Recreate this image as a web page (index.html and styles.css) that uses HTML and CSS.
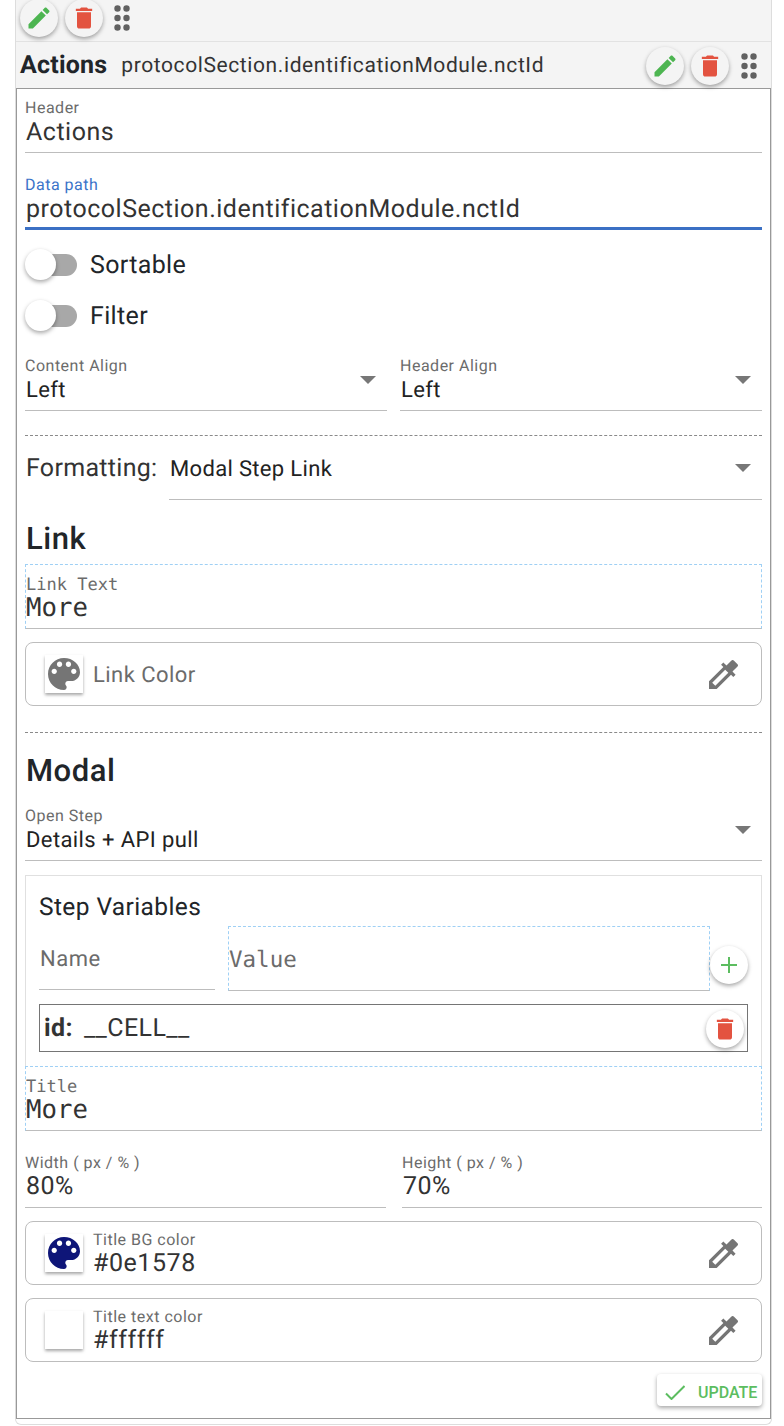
FILE: index.html
```html
<!DOCTYPE html>
<html lang="en">
<head>
<meta charset="utf-8">
<title>Column editor</title>
<link rel="stylesheet" href="styles.css">
</head>
<body>
<svg class="defs" width="0" height="0" aria-hidden="true">
  <symbol id="i-edit" viewBox="0 0 24 24"><path d="M3 17.25V21h3.75L17.81 9.94l-3.75-3.75L3 17.25zM20.71 7.04c.39-.39.39-1.02 0-1.41l-2.34-2.34c-.39-.39-1.02-.39-1.41 0l-1.83 1.83 3.75 3.75 1.83-1.83z"/></symbol>
  <symbol id="i-trash" viewBox="0 0 24 24"><path d="M6 19c0 1.1.9 2 2 2h8c1.1 0 2-.9 2-2V7H6v12zM19 4h-3.5l-1-1h-5l-1 1H5v2h14V4z"/></symbol>
  <symbol id="i-drag" viewBox="0 0 16 26"><circle cx="3.5" cy="3.5" r="3.2"/><circle cx="12.5" cy="3.5" r="3.2"/><circle cx="3.5" cy="13" r="3.2"/><circle cx="12.5" cy="13" r="3.2"/><circle cx="3.5" cy="22.5" r="3.2"/><circle cx="12.5" cy="22.5" r="3.2"/></symbol>
  <symbol id="i-palette" viewBox="3 3 18 18"><path d="M12 3c-4.97 0-9 4.03-9 9s4.03 9 9 9c.83 0 1.5-.67 1.5-1.5 0-.39-.15-.74-.39-1.01-.23-.26-.38-.61-.38-.99 0-.83.67-1.5 1.5-1.5H16c2.76 0 5-2.24 5-5 0-4.42-4.03-8-9-8zm-5.5 9c-.83 0-1.5-.67-1.5-1.5S5.67 9 6.5 9 8 9.67 8 10.5 7.33 12 6.5 12zm3-4C8.67 8 8 7.33 8 6.5S8.67 5 9.5 5s1.5.67 1.5 1.5S10.33 8 9.5 8zm5 0c-.83 0-1.5-.67-1.5-1.5S13.67 5 14.5 5s1.5.67 1.5 1.5S15.33 8 14.5 8zm3 4c-.83 0-1.5-.67-1.5-1.5S16.67 9 17.5 9s1.5.67 1.5 1.5-.67 1.5-1.5 1.5z"/></symbol>
  <symbol id="i-dropper" viewBox="3 3 18 18"><path d="M20.71 5.63l-2.34-2.34c-.39-.39-1.02-.39-1.41 0l-3.12 3.12-1.93-1.91-1.41 1.41 1.42 1.42L3 16.25V21h4.75l8.92-8.92 1.42 1.42 1.41-1.41-1.92-1.92 3.12-3.12c.4-.4.4-1.03.01-1.42zM6.92 19L5 17.08l8.06-8.06 1.92 1.92L6.92 19z"/></symbol>
</svg>
<div class="shell">
  <div class="bar bar-top">
    <span class="fab"><svg class="ic-edit"><use href="#i-edit"/></svg></span>
    <span class="fab"><svg class="ic-trash"><use href="#i-trash"/></svg></span>
    <svg class="ic-drag"><use href="#i-drag"/></svg>
  </div>
  <div class="bar bar-head">
    <strong class="head-title">Actions</strong>
    <span class="head-path">protocolSection.identificationModule.nctId</span>
    <span class="head-tools">
      <span class="fab"><svg class="ic-edit"><use href="#i-edit"/></svg></span>
      <span class="fab"><svg class="ic-trash"><use href="#i-trash"/></svg></span>
      <svg class="ic-drag"><use href="#i-drag"/></svg>
    </span>
  </div>
  <main class="panel">
    <div class="field f-header"><div class="lbl">Header</div><div class="val">Actions</div></div>
    <div class="field focus f-path"><div class="lbl">Data path</div><div class="val">protocolSection.identificationModule.nctId</div></div>
    <div class="toggle t-first"><span class="track"><span class="thumb"></span></span><span class="toggle-text">Sortable</span></div>
    <div class="toggle t-second"><span class="track"><span class="thumb"></span></span><span class="toggle-text">Filter</span></div>
    <div class="two f-align">
      <div class="field select"><div class="lbl">Content Align</div><div class="val v-sm">Left</div><i class="caret"></i></div>
      <div class="field select"><div class="lbl">Header Align</div><div class="val v-sm">Left</div><i class="caret"></i></div>
    </div>
    <hr class="dash d-one">
    <div class="formatting">
      <span class="fmt-label">Formatting:</span>
      <div class="fmt-select"><span>Modal Step Link</span><i class="caret"></i></div>
    </div>
    <h2 class="h h-link">Link</h2>
    <div class="mono-field"><div class="mono-lbl">Link Text</div><div class="mono-val">More</div></div>
    <div class="color c-link">
      <span class="swatch"><svg class="ic-palette grey"><use href="#i-palette"/></svg></span>
      <span class="color-ph">Link Color</span>
      <svg class="ic-dropper"><use href="#i-dropper"/></svg>
    </div>
    <hr class="dash d-two">
    <h2 class="h h-modal">Modal</h2>
    <div class="field select f-step"><div class="lbl">Open Step</div><div class="val v-sm">Details + API pull</div><i class="caret"></i></div>
    <section class="vars">
      <h3 class="vars-title">Step Variables</h3>
      <div class="vars-row">
        <div class="name-in">Name</div>
        <div class="value-in">Value</div>
        <span class="fab white fab-add"><svg class="ic-plus" viewBox="0 0 16 16"><path d="M8 0v16M0 8h16"/></svg></span>
      </div>
      <div class="chip"><b>id:</b><span>__CELL__</span><span class="fab white fab-del"><svg class="ic-trash"><use href="#i-trash"/></svg></span></div>
    </section>
    <div class="mono-field"><div class="mono-lbl">Title</div><div class="mono-val">More</div></div>
    <div class="two gap16 f-size">
      <div class="field"><div class="lbl">Width ( px / % )</div><div class="val">80%</div></div>
      <div class="field"><div class="lbl">Height ( px / % )</div><div class="val">70%</div></div>
    </div>
    <div class="color c-bg">
      <span class="swatch"><svg class="ic-palette navy"><use href="#i-palette"/></svg></span>
      <span class="color-text"><span class="lbl">Title BG color</span><span class="color-val">#0e1578</span></span>
      <svg class="ic-dropper"><use href="#i-dropper"/></svg>
    </div>
    <div class="color c-fg">
      <span class="swatch"></span>
      <span class="color-text"><span class="lbl">Title text color</span><span class="color-val">#ffffff</span></span>
      <svg class="ic-dropper"><use href="#i-dropper"/></svg>
    </div>
    <div class="actions">
      <button class="update" type="button"><svg class="ic-check" viewBox="0 0 20 15"><path d="M1 8.5l5.5 5.5L19.5 1"/></svg>UPDATE</button>
    </div>
  </main>
</div>
</body>
</html>
```

FILE: styles.css
```css
* { box-sizing: border-box; }
html, body { margin: 0; padding: 0; background: #fff; overflow: hidden; }
body { height: 1426px; font-family: Roboto, "Liberation Sans", sans-serif; color: #212529; text-rendering: geometricPrecision; }
.defs { position: absolute; }

.shell { width: 757px; margin-left: 15px; height: 1425px; border-left: 1px solid #ddd; border-right: 1px solid #ddd; border-bottom: 1px solid #ddd; border-radius: 0 0 6px 6px; background: #fff; }
.bar { display: flex; align-items: center; background: #f4f4f4; }
.bar-top { height: 42px; border-bottom: 1px solid #e2e2e2; padding-left: 4px; gap: 7px; }
.bar-top .fab { position: relative; top: -3px; }
.bar-top .ic-drag { margin-left: 4px; position: relative; top: -3px; }
.bar-head { height: 46px; padding-left: 4px; }
.head-title { font-size: 25px; font-weight: 700; letter-spacing: .2px; margin-right: 14px; }
.head-path { font-size: 21px; letter-spacing: .6px; color: #333; padding-top: 2px; }
.head-tools { margin-left: auto; display: flex; align-items: center; gap: 7px; padding: 2px 14px 0 0; }
.head-tools .ic-drag { margin-left: 5px; }

.fab { width: 38px; height: 38px; border-radius: 50%; background: #f4f4f4; box-shadow: 0 2px 4px rgba(0,0,0,.35); display: inline-flex; align-items: center; justify-content: center; flex: none; }
.fab.white { background: #fff; }
.ic-edit { width: 28px; height: 28px; fill: #4db551; }
.ic-trash { width: 28px; height: 28px; fill: #e35340; }
.ic-drag { width: 16px; height: 26px; fill: #616161; flex: none; }

.panel { width: 755px; height: 1331px; background: #fff; border: 1px solid #999; padding: 9px 8px 0; }
.field { position: relative; border-bottom: 1px solid #bdbdbd; }
.lbl { display: block; font-size: 16px; line-height: 20px; letter-spacing: .5px; color: #6b6b6b; }
.val { font-size: 25px; line-height: 29px; letter-spacing: .5px; color: #333; padding: 0 1px 6px; }
.v-sm { font-size: 22px; line-height: 28px; letter-spacing: .4px; color: #222; margin-top: 1px; padding-bottom: 5px; }
.f-header { height: 55px; margin-bottom: 22px; }
.focus { border-bottom: 3px solid #3b70c4; height: 55px; }
.focus .lbl { color: #3b73c9; }
.toggle { display: flex; align-items: center; gap: 13px; font-size: 25px; letter-spacing: .35px; height: 31px; color: #212529; }
.toggle-text { padding-top: 2px; }
.t-first { margin-top: 19px; }
.t-second { margin-top: 20px; }
.track { position: relative; display: block; width: 47px; height: 22px; margin-left: 5px; border-radius: 11px; background: #a8a8a8; flex: none; }
.thumb { position: absolute; left: -5px; top: -4.5px; width: 31px; height: 31px; border-radius: 50%; background: #fff; box-shadow: 0 2px 4px rgba(0,0,0,.35); }

.two { display: grid; grid-template-columns: 362px 362px; gap: 13px; }
.two.gap16 { grid-template-columns: 361px 360px; gap: 16px; }
.f-align { margin-top: 25px; height: 55px; }
.select { height: 55px; }
.caret { position: absolute; right: 11px; top: 20px; width: 0; height: 0; border-left: 8px solid transparent; border-right: 8px solid transparent; border-top: 8px solid #777; }
.dash { border: 0; border-top: 1px dashed #8a8a8a; margin: 0; }
.d-one { margin-top: 24px; }
.formatting { display: flex; height: 64px; }
.fmt-label { font-size: 25px; line-height: 66px; letter-spacing: .3px; padding-left: 1px; width: 144px; flex: none; color: #333; }
.fmt-select { position: relative; flex: 1; border-bottom: 1px solid #bdbdbd; font-size: 22px; letter-spacing: .33px; line-height: 67px; padding-left: 1px; color: #222; }
.fmt-select .caret { top: 28px; }
.h { margin: 0; font-size: 31px; font-weight: 500; line-height: 40px; letter-spacing: .5px; color: #212529; padding-left: 1px; }
.h-link { margin-top: 19px; }
.mono-field { height: 65px; border: 1px dashed #9fd0f5; border-bottom: 1px solid #bdbdbd; }
.h-link + .mono-field { margin-top: 5px; }
.mono-lbl { font-family: "DejaVu Sans Mono", monospace; font-size: 17px; line-height: 20px; color: #6b6b6b; margin-top: 10px; }
.mono-val { font-family: "DejaVu Sans Mono", monospace; font-size: 25.7px; line-height: 30px; color: #333; margin-top: -2px; }

.color { display: flex; align-items: center; height: 64px; border: 1px solid #bdbdbd; border-radius: 8px; padding: 0 23px 0 19px; }
.c-link { margin-top: 13px; }
.swatch { width: 38px; height: 38px; display: flex; align-items: center; justify-content: center; background: #fff; box-shadow: 0 2px 3px rgba(0,0,0,.35); flex: none; margin-right: 10px; }
.ic-palette { width: 32px; height: 32px; }
.grey { fill: #757575; }
.navy { fill: #0e1578; }
.ic-dropper { width: 29px; height: 29px; fill: #757575; margin-left: auto; flex: none; }
.color-ph { font-size: 22px; letter-spacing: .45px; color: #6b6b6b; padding-top: 2px; }
.color-text { display: flex; flex-direction: column; margin-top: 2px; }
.color-text .lbl { line-height: 19px; }
.color-val { font-size: 25px; line-height: 28px; letter-spacing: .55px; color: #333; margin-top: 1px; }
.d-two { margin-top: 26px; }
.h-modal { margin-top: 18px; }
.f-step { margin-top: 15px; }

.vars { height: 191px; margin-top: 14px; border: 1px solid #e0e0e0; border-bottom: 0; padding: 0 13px; }
.vars-title { margin: 0; font-size: 24.5px; font-weight: 400; letter-spacing: .4px; line-height: 30px; padding-top: 16px; height: 50px; }
.vars-row { display: flex; align-items: flex-start; }
.name-in { width: 176px; height: 64px; border-bottom: 1px solid #bdbdbd; font-size: 22px; letter-spacing: .5px; color: #6b6b6b; line-height: 68px; padding-left: 1px; flex: none; }
.value-in { width: 482px; height: 65px; margin-left: 13px; border: 1px dashed #9fd0f5; border-bottom: 1px solid #bdbdbd; font-family: "DejaVu Sans Mono", monospace; font-size: 22.5px; color: #6b6b6b; line-height: 67px; flex: none; }
.fab-add { margin-top: 20px; }
.ic-plus { width: 16px; height: 16px; fill: none; stroke: #5cbd60; stroke-width: 2; }
.chip { position: relative; display: flex; align-items: center; height: 48px; width: 709px; margin-top: 13px; border: 1px solid #757575; padding-left: 4px; font-size: 25px; letter-spacing: .4px; color: #333; gap: 11px; }
.chip b { font-weight: 700; }
.fab-del { position: absolute; right: 3px; top: 5px; }

.f-size { margin-top: 22px; height: 55px; }
.f-size .field { height: 55px; }
.f-size .val { margin-top: -1px; }
.c-bg { margin-top: 13px; }
.c-fg { margin-top: 13px; }
.actions { display: flex; justify-content: flex-end; margin-top: 12px; }
.update { display: flex; align-items: center; width: 105px; height: 32px; border: 0; border-radius: 4px; background: #fff; box-shadow: 0 2px 4px rgba(0,0,0,.35); font: 500 16px Roboto, sans-serif; color: #5cbd60; padding: 4px 0 0 8px; }
.ic-check { width: 20px; height: 15px; fill: none; stroke: #5cbd60; stroke-width: 2; margin-right: 13px; }
```
